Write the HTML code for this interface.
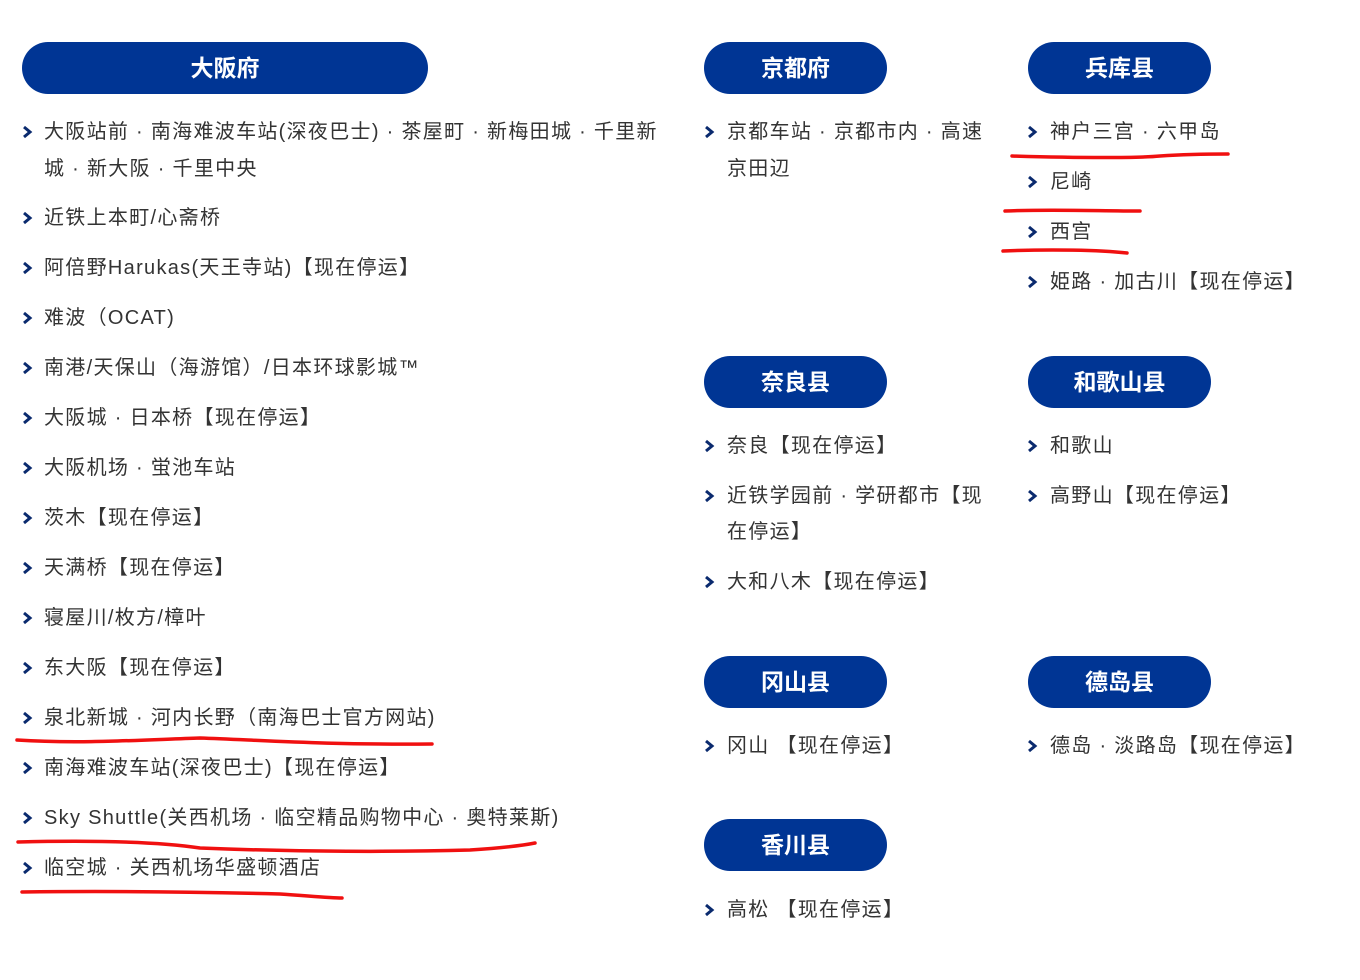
<!DOCTYPE html>
<html><head><meta charset="utf-8"><style>
body{margin:0;width:1360px;height:980px;background:#fff;position:relative;overflow:hidden;font-family:"Liberation Sans","Noto Sans CJK SC",sans-serif;}
.p{position:absolute;height:52px;border-radius:26px;background:#003594;color:#fff;font-weight:bold;font-size:23px;text-align:center;line-height:52px;}
.i{position:absolute;height:28px;line-height:28px;font-size:20px;color:#333;white-space:nowrap;letter-spacing:1.3px;}
</style></head><body>
<div class="p" style="left:22px;top:42px;width:406px">大阪府</div>
<div class="p" style="left:704px;top:42px;width:183px">京都府</div>
<div class="p" style="left:1028px;top:42px;width:183px">兵库县</div>
<div class="p" style="left:704px;top:356px;width:183px">奈良县</div>
<div class="p" style="left:1028px;top:356px;width:183px">和歌山县</div>
<div class="p" style="left:704px;top:656px;width:183px">冈山县</div>
<div class="p" style="left:1028px;top:656px;width:183px">德岛县</div>
<div class="p" style="left:704px;top:819px;width:183px">香川县</div>

<svg width="1360" height="980" style="position:absolute;left:0;top:0">
<defs><path id="ch" d="M-3,-5 L3,0 L-3,5" fill="none" stroke="#0a2a6e" stroke-width="3"/></defs>
<g>
<use href="#ch" x="27" y="132"/><use href="#ch" x="27" y="218"/><use href="#ch" x="27" y="268"/><use href="#ch" x="27" y="318"/><use href="#ch" x="27" y="368"/><use href="#ch" x="27" y="418"/><use href="#ch" x="27" y="468"/><use href="#ch" x="27" y="518"/><use href="#ch" x="27" y="568"/><use href="#ch" x="27" y="618"/><use href="#ch" x="27" y="668"/><use href="#ch" x="27" y="718"/><use href="#ch" x="27" y="768"/><use href="#ch" x="27" y="818"/><use href="#ch" x="27" y="868"/>
<use href="#ch" x="709" y="132"/><use href="#ch" x="709" y="446"/><use href="#ch" x="709" y="496"/><use href="#ch" x="709" y="582"/><use href="#ch" x="709" y="746"/><use href="#ch" x="709" y="910"/>
<use href="#ch" x="1032" y="132"/><use href="#ch" x="1032" y="182"/><use href="#ch" x="1032" y="232"/><use href="#ch" x="1032" y="282"/><use href="#ch" x="1032" y="446"/><use href="#ch" x="1032" y="496"/><use href="#ch" x="1032" y="746"/>
</g>
<g fill="none" stroke="#f01010" stroke-width="3.5" stroke-linecap="round">
<path d="M1012,156 C1080,158 1140,158 1160,156 C1190,154 1210,154 1228,154"/>
<path d="M1005,211 C1050,209 1100,211 1140,211"/>
<path d="M1003,251 C1050,249 1100,250 1127,253"/>
<path d="M17,740 C80,744 140,740 200,738 C260,740 320,745 432,744"/>
<path d="M18,842 C100,840 160,842 200,848 C300,852 400,852 470,850 C500,848 520,846 535,843"/>
<path d="M22,892 C100,891 200,892 280,894 C310,896 330,898 342,898"/>
</g>
</svg>

<div class="i" style="left:44px;top:118px">大阪站前 · 南海难波车站(深夜巴士) · 茶屋町 · 新梅田城 · 千里新</div>
<div class="i" style="left:44px;top:155px">城 · 新大阪 · 千里中央</div>
<div class="i" style="left:44px;top:204px">近铁上本町/心斋桥</div>
<div class="i" style="left:44px;top:254px">阿倍野Harukas(天王寺站)【现在停运】</div>
<div class="i" style="left:44px;top:304px">难波（OCAT)</div>
<div class="i" style="left:44px;top:354px">南港/天保山（海游馆）/日本环球影城™</div>
<div class="i" style="left:44px;top:404px">大阪城 · 日本桥【现在停运】</div>
<div class="i" style="left:44px;top:454px">大阪机场 · 蛍池车站</div>
<div class="i" style="left:44px;top:504px">茨木【现在停运】</div>
<div class="i" style="left:44px;top:554px">天满桥【现在停运】</div>
<div class="i" style="left:44px;top:604px">寝屋川/枚方/樟叶</div>
<div class="i" style="left:44px;top:654px">东大阪【现在停运】</div>
<div class="i" style="left:44px;top:704px">泉北新城 · 河内长野（南海巴士官方网站)</div>
<div class="i" style="left:44px;top:754px">南海难波车站(深夜巴士)【现在停运】</div>
<div class="i" style="left:44px;top:804px">Sky Shuttle(关西机场 · 临空精品购物中心 · 奥特莱斯)</div>
<div class="i" style="left:44px;top:854px">临空城 · 关西机场华盛顿酒店</div>

<div class="i" style="left:727px;top:118px">京都车站 · 京都市内 · 高速</div>
<div class="i" style="left:727px;top:155px">京田辺</div>
<div class="i" style="left:727px;top:432px">奈良【现在停运】</div>
<div class="i" style="left:727px;top:482px">近铁学园前 · 学研都市【现</div>
<div class="i" style="left:727px;top:518px">在停运】</div>
<div class="i" style="left:727px;top:568px">大和八木【现在停运】</div>
<div class="i" style="left:727px;top:732px">冈山 【现在停运】</div>
<div class="i" style="left:727px;top:896px">高松 【现在停运】</div>

<div class="i" style="left:1050px;top:118px">神户三宫 · 六甲岛</div>
<div class="i" style="left:1050px;top:168px">尼崎</div>
<div class="i" style="left:1050px;top:218px">西宫</div>
<div class="i" style="left:1050px;top:268px">姫路 · 加古川【现在停运】</div>
<div class="i" style="left:1050px;top:432px">和歌山</div>
<div class="i" style="left:1050px;top:482px">高野山【现在停运】</div>
<div class="i" style="left:1050px;top:732px">德岛 · 淡路岛【现在停运】</div>
</body></html>
